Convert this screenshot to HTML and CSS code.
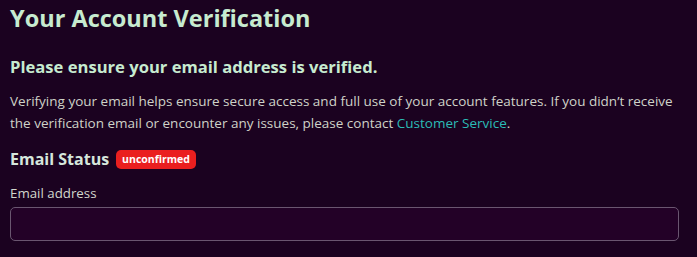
FILE: index.html
```html
<!DOCTYPE html>
<html>
<head>
<meta charset="utf-8">
<link rel="stylesheet" href="styles.css">
</head>
<body>
<main class="page">
  <h1 class="title">Your Account Verification</h1>
  <h2 class="subtitle">Please ensure your email address is verified.</h2>
  <p class="intro">Verifying your email helps ensure secure access and full use of your account features. If you didn’t receive the verification email or encounter any issues, please contact <a class="link" href="#">Customer Service</a>.</p>
  <div class="status">
    <h3 class="status-title">Email Status</h3>
    <span class="badge">unconfirmed</span>
  </div>
  <label class="field-label" for="email">Email address</label>
  <input class="field-input" id="email" type="text">
</main>
</body>
</html>
```
FILE: styles.css
```css
html, body {
  margin: 0;
  background: #1b0220;
}
body {
  font-family: "Open Sans", "Noto Sans", sans-serif;
  color: #cfd2c8;
}
.page {
  padding: 0 18px 0 10px;
  display: flex;
  flex-direction: column;
}
.title {
  margin: 2px 0 0;
  font-size: 23.5px;
  line-height: 32px;
  font-weight: 700;
  color: #c7ebd0;
}
.subtitle {
  margin: 21px 0 0;
  font-size: 16.6px;
  line-height: 24px;
  font-weight: 700;
  color: #c7ebd0;
}
.intro {
  margin: 11px 0 0;
  font-size: 13.5px;
  line-height: 22px;
  color: #cfd2c8;
}
.link {
  color: #2bbcb6;
  text-decoration: none;
}
.status {
  margin-top: 13px;
  display: flex;
  align-items: center;
  gap: 7px;
}
.status-title {
  margin: 0;
  font-size: 16px;
  line-height: 24px;
  font-weight: 700;
  color: #d6e6dc;
}
.badge {
  background: #ea1f1f;
  color: #fff;
  font-size: 10.5px;
  font-weight: 700;
  line-height: 19px;
  padding: 0 6px;
  border-radius: 5px;
}
.field-label {
  margin-top: 12px;
  font-size: 13.3px;
  line-height: 20px;
  color: #d2d6cc;
}
.field-input {
  margin-top: 4px;
  height: 34px;
  box-sizing: border-box;
  background: #230127;
  border: 1px solid #6a5670;
  border-radius: 5px;
  outline: none;
  font: inherit;
  color: #ddd;
}
```
